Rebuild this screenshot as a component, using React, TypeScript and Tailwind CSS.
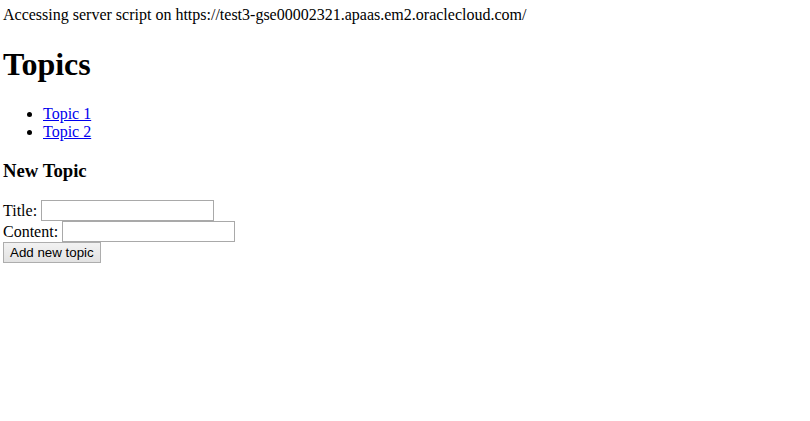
import React from 'react';

const topics = [
  { label: 'Topic 1', href: '#topic-1' },
  { label: 'Topic 2', href: '#topic-2' },
];

const App: React.FC = () => {
  return (
    <div className="min-h-[421px] bg-white px-[3px] pt-[6px] font-['Liberation_Serif','Times_New_Roman',serif] text-[16px] text-black">
      <div className="leading-[18px]">
        Accessing server script on https://test3-gse00002321.apaas.em2.oraclecloud.com/
      </div>

      <h1 className="mt-[22px] text-[32px] font-bold leading-[36px]">Topics</h1>

      <ul className="mt-[23px] list-disc pl-[40px] leading-[18px]">
        {topics.map((t) => (
          <li key={t.href}>
            <a href={t.href} className="text-[#0000ee] underline">
              {t.label}
            </a>
          </li>
        ))}
      </ul>

      <h3 className="mt-[19px] text-[18.72px] font-bold leading-[21px]">New Topic</h3>

      <form className="mt-[19px] flex flex-col items-start" onSubmit={(e) => e.preventDefault()}>
        <div className="flex h-[21px] items-center">
          <label className="leading-[18px]">Title:</label>
          <input
            type="text"
            className="ml-[4px] h-[21px] w-[173px] border border-[#a9a9a9] bg-white px-[2px] font-['Liberation_Sans',Arial,sans-serif] text-[13.33px] outline-none"
          />
        </div>
        <div className="flex h-[21px] items-center">
          <label className="leading-[18px]">Content:</label>
          <input
            type="text"
            className="ml-[4px] h-[21px] w-[173px] border border-[#a9a9a9] bg-white px-[2px] font-['Liberation_Sans',Arial,sans-serif] text-[13.33px] outline-none"
          />
        </div>
        <button
          type="submit"
          className="h-[21px] border border-[#adadad] bg-gradient-to-b from-[#f2f2f2] to-[#e2e2e2] px-[6px] font-['Liberation_Sans',Arial,sans-serif] text-[13.33px] leading-[15px] text-black"
        >
          Add new topic
        </button>
      </form>
    </div>
  );
};

export default App;
